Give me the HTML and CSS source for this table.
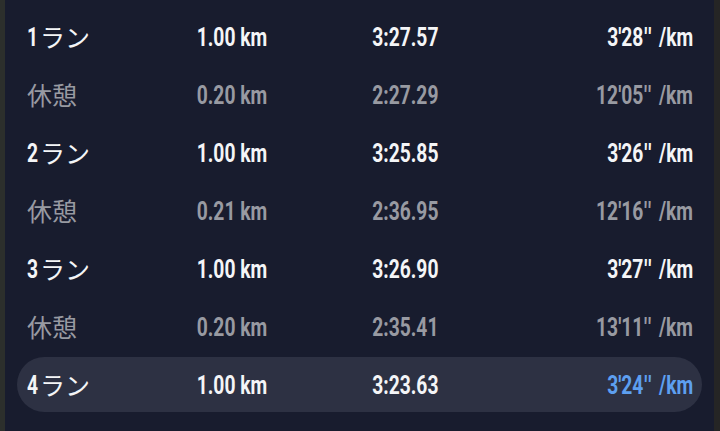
FILE: index.html
```html
<!DOCTYPE html>
<html lang="ja">
<head>
<meta charset="utf-8">
<link rel="stylesheet" href="styles.css">
</head>
<body>
<div class="frame">
  <div class="panel">
    <div class="row run"><div class="label"><span class="lnum"><span class="c">1</span></span>ラン</div><div class="dist"><span class="c">1.00 km</span></div><div class="time"><span class="c">3:27.57</span></div><div class="pace"><span class="c">3'28<span class="q">''</span> /km</span></div></div>
    <div class="row rest"><div class="label">休憩</div><div class="dist"><span class="c">0.20 km</span></div><div class="time"><span class="c">2:27.29</span></div><div class="pace"><span class="c">12'05<span class="q">''</span> /km</span></div></div>
    <div class="row run"><div class="label"><span class="lnum"><span class="c">2</span></span>ラン</div><div class="dist"><span class="c">1.00 km</span></div><div class="time"><span class="c">3:25.85</span></div><div class="pace"><span class="c">3'26<span class="q">''</span> /km</span></div></div>
    <div class="row rest"><div class="label">休憩</div><div class="dist"><span class="c">0.21 km</span></div><div class="time"><span class="c">2:36.95</span></div><div class="pace"><span class="c">12'16<span class="q">''</span> /km</span></div></div>
    <div class="row run"><div class="label"><span class="lnum"><span class="c">3</span></span>ラン</div><div class="dist"><span class="c">1.00 km</span></div><div class="time"><span class="c">3:26.90</span></div><div class="pace"><span class="c">3'27<span class="q">''</span> /km</span></div></div>
    <div class="row rest"><div class="label">休憩</div><div class="dist"><span class="c">0.20 km</span></div><div class="time"><span class="c">2:35.41</span></div><div class="pace"><span class="c">13'11<span class="q">''</span> /km</span></div></div>
    <div class="row run best"><div class="label"><span class="lnum"><span class="c">4</span></span>ラン</div><div class="dist"><span class="c">1.00 km</span></div><div class="time"><span class="c">3:23.63</span></div><div class="pace"><span class="c">3'24<span class="q">''</span> /km</span></div></div>
    <div class="row rest"><div class="label">休憩</div><div class="dist"><span class="c">0.20 km</span></div><div class="time"><span class="c">2:30.12</span></div><div class="pace"><span class="c">12'30<span class="q">''</span> /km</span></div></div>
  </div>
</div>
</body>
</html>
```
FILE: styles.css
```css
* { box-sizing: border-box; }
html, body {
  margin: 0;
  padding: 0;
  height: 431px;
  overflow: hidden;
}
body {
  background: #262727;
}
.frame {
  display: flex;
  height: 431px;
  background: linear-gradient(to right, #2c2f2c 0, #2c2f2c 5px, #252525 5px);
}
.panel {
  margin: 0 6px 0 5px;
  flex: 1;
  background: #181c2e;
  padding: 9px 12px 0 12px;
  display: flex;
  flex-direction: column;
  gap: 3px;
}
.row {
  height: 55px;
  flex: none;
  display: grid;
  grid-template-columns: 120px 120px 171px 1fr;
  align-items: center;
  padding: 0 9px 0 10px;
  border-radius: 28px;
  font-family: Roboto, "Liberation Sans", sans-serif;
  font-weight: 700;
  font-size: 26px;
  line-height: 1;
  white-space: nowrap;
}
.row.run { color: #f4f5f7; }
.row.rest { color: #989aa2; }
.row.best { background: #2d3143; }
.row.best .pace { color: #5d9ff0; }
.label {
  font-family: "Noto Sans CJK JP", sans-serif;
  font-weight: 400;
  font-size: 25px;
  display: flex;
  align-items: center;
}
.lnum {
  display: inline-block;
  width: 13px;
  font-family: Roboto, "Liberation Sans", sans-serif;
  font-weight: 700;
  font-size: 26px;
}
.lnum .c { transform-origin: left center; }
.dist, .time, .pace { text-align: right; }
.c {
  display: inline-block;
  transform: scaleX(0.74);
  transform-origin: right center;
}
.q {
  letter-spacing: 2px;
  margin-left: 1px;
}
.pace .c { word-spacing: 2px; }
```
